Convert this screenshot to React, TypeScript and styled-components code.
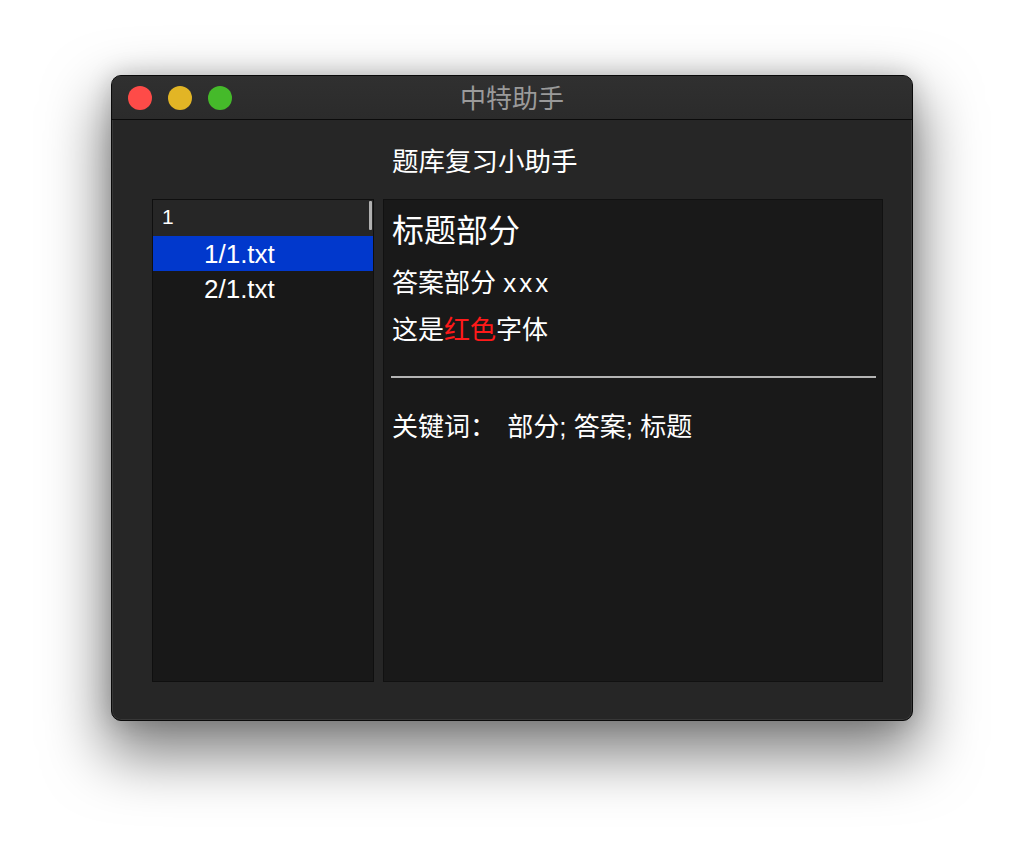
import React from "react";
import styled, { createGlobalStyle } from "styled-components";

const Global = createGlobalStyle`
  html, body { margin: 0; padding: 0; background: #ffffff; }
  body { font-family: "Liberation Sans", "Noto Sans CJK SC", sans-serif; }
  * { box-sizing: border-box; }
`;

const Page = styled.div`
  width: 1024px;
  height: 868px;
  padding: 75px 0 0 111px;
  overflow: hidden;
`;

const Window = styled.div`
  width: 802px;
  height: 646px;
  border: 1px solid #0a0a0a;
  border-radius: 10px;
  background: #262626;
  box-shadow: 0 28px 60px 6px rgba(0, 0, 0, 0.5), 0 0 24px rgba(0, 0, 0, 0.18),
    inset 0 0 0 1px rgba(255, 255, 255, 0.08);
  display: flex;
  flex-direction: column;
  overflow: hidden;
`;

const TitleBar = styled.div`
  position: relative;
  height: 44px;
  flex: none;
  background: linear-gradient(#303030, #2b2b2b);
  border-bottom: 1px solid #0b0b0b;
  display: flex;
  align-items: center;
  justify-content: center;
`;

const Lights = styled.div`
  position: absolute;
  left: 16px;
  top: 10px;
  display: flex;
  gap: 16px;
`;

const Light = styled.span<{ $c: string }>`
  width: 24px;
  height: 24px;
  border-radius: 50%;
  background: ${(p) => p.$c};
`;

const Title = styled.div`
  font-size: 26px;
  line-height: 30px;
  color: #9a9a9a;
  margin-top: 2px;
`;

const Body = styled.div`
  flex: 1;
  display: flex;
  flex-direction: column;
  padding: 27px 29px 38px 40px;
`;

const Heading = styled.div`
  font-size: 26.5px;
  line-height: 30px;
  color: #ffffff;
  padding-left: 240px;
  margin-bottom: 22px;
`;

const Panels = styled.div`
  flex: 1;
  display: flex;
  gap: 9px;
`;

const ListPanel = styled.div`
  width: 222px;
  border: 1px solid #0f0f0f;
  background: #181818;
  display: flex;
  flex-direction: column;
`;

const ListHeader = styled.div`
  position: relative;
  height: 36px;
  background: #262626;
  color: #ffffff;
  font-size: 21px;
  line-height: 33px;
  padding-left: 9px;
`;

const ScrollThumb = styled.span`
  position: absolute;
  right: 1px;
  top: 1px;
  width: 3px;
  height: 29px;
  background: #b0b0b0;
  border-radius: 1px;
`;

const Row = styled.div<{ $selected?: boolean }>`
  height: 35px;
  line-height: 36px;
  padding-left: 51px;
  font-size: 26px;
  color: #ffffff;
  background: ${(p) => (p.$selected ? "#0138cc" : "transparent")};
`;

const DetailPanel = styled.div`
  flex: 1;
  border: 1px solid #111111;
  background: #191919;
  padding: 10px 6px 0 8px;
  color: #ffffff;
  display: flex;
  flex-direction: column;
`;

const DetailTitle = styled.div`
  font-size: 32px;
  line-height: 42px;
  margin-bottom: 8px;
`;

const Line = styled.div`
  font-size: 26px;
  line-height: 47px;
  white-space: pre;
`;

const Spaced = styled.span`
  letter-spacing: 3px;
`;

const Red = styled.span`
  color: #ff1a1a;
`;

const Rule = styled.hr`
  margin: 22px 0 0 -1px;
  border: none;
  height: 2px;
  background: #b4b4b4;
`;

const Keywords = styled.div`
  font-size: 26px;
  line-height: 32px;
  margin-top: 33px;
  white-space: pre;
`;

const KeyLabel = styled.span`
  margin-right: 4px;
`;

export default function App() {
  return (
    <Page>
      <Global />
      <Window>
        <TitleBar>
          <Lights>
            <Light $c="#fe4b48" />
            <Light $c="#e2b525" />
            <Light $c="#45ba2a" />
          </Lights>
          <Title>中特助手</Title>
        </TitleBar>
        <Body>
          <Heading>题库复习小助手</Heading>
          <Panels>
            <ListPanel>
              <ListHeader>
                1
                <ScrollThumb />
              </ListHeader>
              <Row $selected>1/1.txt</Row>
              <Row>2/1.txt</Row>
            </ListPanel>
            <DetailPanel>
              <DetailTitle>标题部分</DetailTitle>
              <Line>
                答案部分 <Spaced>xxx</Spaced>
              </Line>
              <Line>
                这是<Red>红色</Red>字体
              </Line>
              <Rule />
              <Keywords>
                <KeyLabel>关键词：</KeyLabel> 部分; 答案; 标题
              </Keywords>
            </DetailPanel>
          </Panels>
        </Body>
      </Window>
    </Page>
  );
}
